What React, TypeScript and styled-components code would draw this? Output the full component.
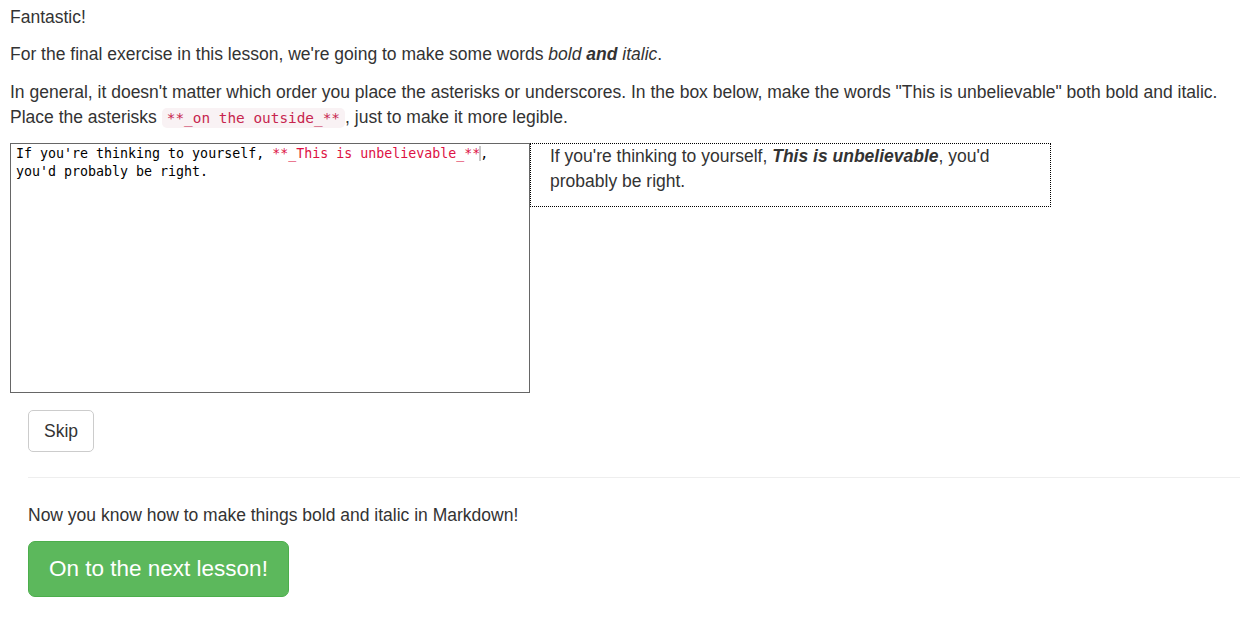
import React from "react";
import styled, { createGlobalStyle } from "styled-components";

const Global = createGlobalStyle`
  html, body { margin: 0; padding: 0; background: #fff; }
  body {
    font-family: "Liberation Sans", Arial, sans-serif;
    font-size: 17.5px;
    line-height: 25px;
    color: #333;
  }
`;

const Page = styled.div`
  padding: 4.5px 7px 20px 10px;
`;

const Para = styled.p`
  margin: 0 0 12.5px 0;
`;

const InlineCode = styled.code`
  font-family: "DejaVu Sans Mono", "Liberation Mono", monospace;
  font-size: 14.4px;
  padding: 2px 5px;
  color: #c7254e;
  background: #f9f2f4;
  border-radius: 5px;
`;

const Exercise = styled.div`
  display: flex;
  align-items: flex-start;
`;

const Editor = styled.div`
  box-sizing: border-box;
  width: 520px;
  height: 250px;
  flex: none;
  border: 1px solid #666;
  padding: 1px 5px;
  font-family: "DejaVu Sans Mono", "Liberation Mono", monospace;
  font-size: 13.3px;
  line-height: 18px;
  color: #000;
  white-space: pre-wrap;
`;

const Marked = styled.span`
  color: #dd1144;
`;

const Caret = styled.span`
  display: inline-block;
  width: 2px;
  height: 15px;
  margin: 0 -1px 0 -1px;
  vertical-align: -3px;
  background: #c8c8c8;
`;

const Preview = styled.div`
  box-sizing: border-box;
  width: 521px;
  flex: none;
  border: 1px dotted #000;
  padding: 0 20px 0 19px;
`;

const PreviewText = styled.p`
  margin: 0 0 12px 0;
`;

const Footer = styled.div`
  padding: 17px 0 0 18px;
`;

const Button = styled.button<{ $variant?: "default" | "success" }>`
  font-family: "Liberation Sans", Arial, sans-serif;
  cursor: pointer;
  border-radius: ${(p) => (p.$variant === "success" ? "7px" : "5px")};
  border: 1px solid ${(p) => (p.$variant === "success" ? "#4cae4c" : "#ccc")};
  background: ${(p) => (p.$variant === "success" ? "#5cb85c" : "#fff")};
  color: ${(p) => (p.$variant === "success" ? "#fff" : "#333")};
  font-size: ${(p) => (p.$variant === "success" ? "22.5px" : "17.5px")};
  line-height: ${(p) => (p.$variant === "success" ? "30px" : "25px")};
  padding: ${(p) => (p.$variant === "success" ? "12px 20px" : "7.5px 15px")};
`;

const Rule = styled.hr`
  border: 0;
  border-top: 1px solid #eee;
  margin: 25px 0;
`;

const Note = styled.p`
  margin: 0 0 12.5px 0;
`;

export default function App() {
  return (
    <>
      <Global />
      <Page>
        <Para>Fantastic!</Para>
        <Para>
          For the final exercise in this lesson, we're going to make some words{" "}
          <em>
            bold <strong>and</strong> italic
          </em>
          .
        </Para>
        <Para>
          In general, it doesn't matter which order you place the asterisks or underscores. In the box below, make the
          words "This is unbelievable" both bold and italic. Place the asterisks{" "}
          <InlineCode>**_on the outside_**</InlineCode>, just to make it more legible.
        </Para>
        <Exercise>
          <Editor>
            If you're thinking to yourself, <Marked>**_This is unbelievable_**</Marked>
            <Caret />,{"\n"}you'd probably be right.
          </Editor>
          <Preview>
            <PreviewText>
              If you're thinking to yourself,{" "}
              <em>
                <strong>This is unbelievable</strong>
              </em>
              , you'd probably be right.
            </PreviewText>
          </Preview>
        </Exercise>
        <Footer>
          <Button>Skip</Button>
          <Rule />
          <Note>Now you know how to make things bold and italic in Markdown!</Note>
          <Button $variant="success">On to the next lesson!</Button>
        </Footer>
      </Page>
    </>
  );
}
